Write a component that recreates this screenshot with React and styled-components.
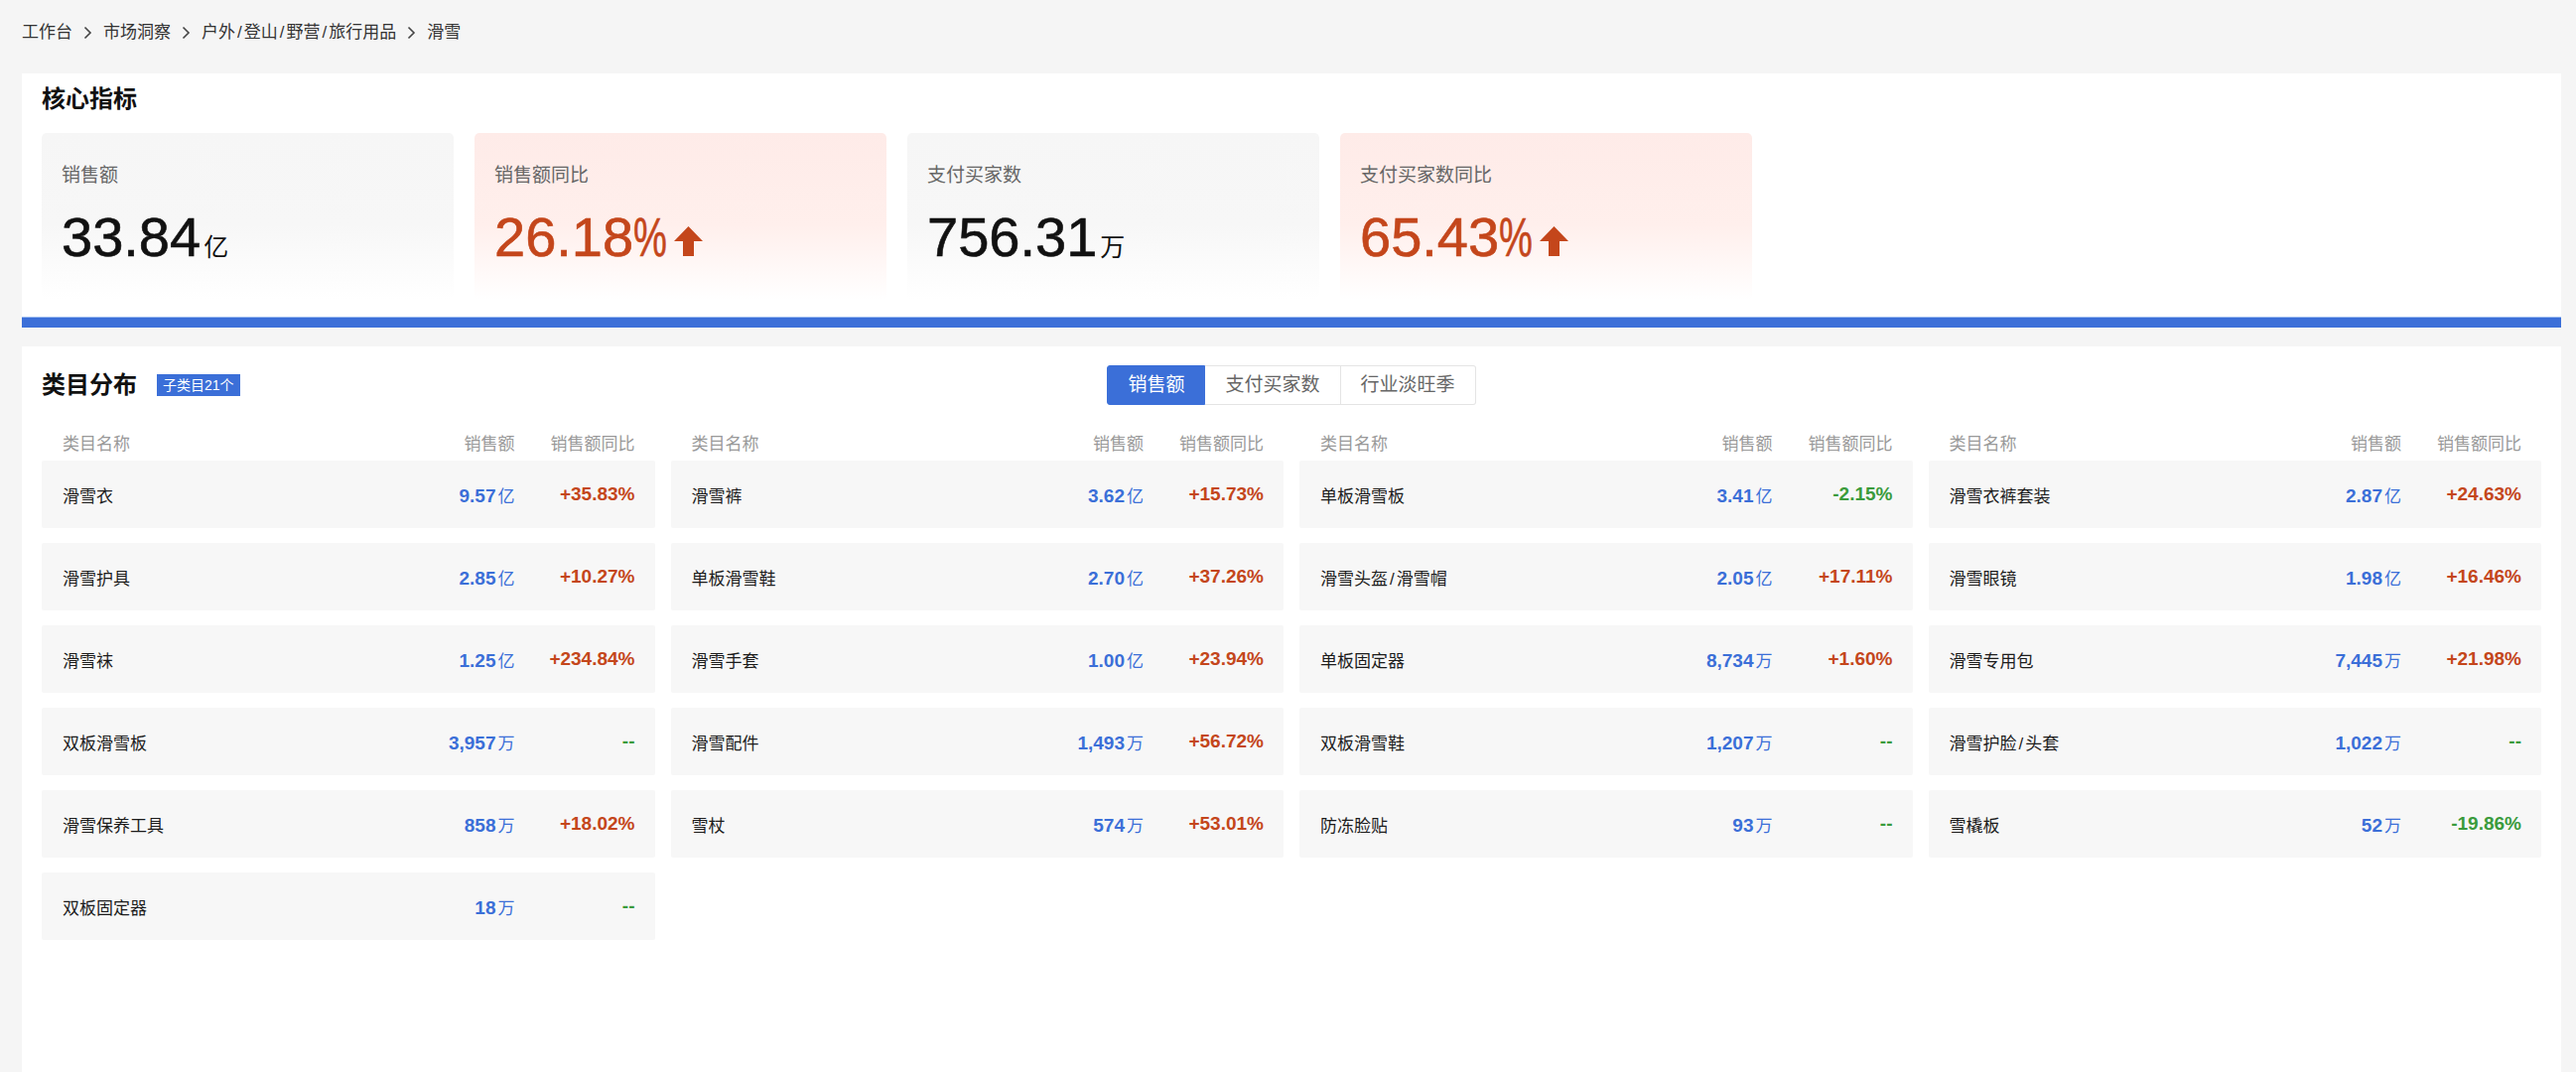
import React from "react";
import styled, { createGlobalStyle } from "styled-components";

const GlobalStyle = createGlobalStyle`
  html, body {
    margin: 0;
    padding: 0;
    background: #f5f5f5;
    font-family: "Liberation Sans", "Noto Sans CJK SC", Arial, sans-serif;
    color: #222;
  }
  * { box-sizing: border-box; }
`;

const BLUE = "#3b6fd8";
const RED = "#c4461b";
const GREEN = "#3a9b3c";

const Page = styled.div`
  padding: 0 15px 0 22px;
  min-height: 1080px;
`;

const Breadcrumb = styled.nav`
  height: 74px;
  padding-bottom: 8px;
  display: flex;
  align-items: center;
  font-size: 17px;
  color: #333;
`;

const Crumb = styled.span`
  line-height: 24px;
`;

const Slash = styled.span`
  padding: 0 2px;
`;

const Sep = styled.span`
  display: inline-flex;
  align-items: center;
  margin: 0 11px;
`;

const Panel = styled.section`
  background: #fff;
  padding: ${(p) => p.$pad};
`;

const KpiPanel = styled(Panel)`
  border-bottom: 10px solid ${BLUE};
  box-shadow: inset 0 -1px 0 #9dbcf0;
  margin-bottom: 19px;
`;

const CategoryPanel = styled(Panel)`
  min-height: 731px;
`;

const PanelTitle = styled.h2`
  margin: 0;
  font-size: 24px;
  line-height: 32px;
  font-weight: 700;
  color: #111;
`;

const Cards = styled.div`
  display: flex;
  gap: 21px;
  margin-top: 18px;
  padding-bottom: 18px;
`;

const Card = styled.div`
  width: 415px;
  height: 168px;
  border-radius: 5px;
  padding: 30px 20px 0;
  background: ${(p) =>
    p.$tone === "red"
      ? "linear-gradient(180deg, #feebe8 0%, #ffefec 55%, #ffffff 100%)"
      : "linear-gradient(180deg, #f6f6f6 0%, #f7f7f7 55%, #ffffff 100%)"};
`;

const CardLabel = styled.div`
  font-size: 19px;
  line-height: 26px;
  color: #666;
`;

const CardValue = styled.div`
  margin-top: 22px;
  display: flex;
  align-items: baseline;
  font-size: 56px;
  line-height: 53px;
  color: ${(p) => (p.$tone === "red" ? RED : "#111")};
  -webkit-text-stroke: 0.6px currentColor;
`;

const Percent = styled.span`
  display: inline-block;
  transform: scaleX(0.68);
  transform-origin: left center;
  margin-right: -20px;
`;

const Unit = styled.span`
  font-size: 25px;
  margin-left: 3px;
  -webkit-text-stroke: 0;
`;

const ArrowWrap = styled.span`
  display: inline-flex;
  margin-left: 11px;
`;

const SectionHead = styled.div`
  display: grid;
  grid-template-columns: 1fr auto 1fr;
  align-items: center;
  height: 40px;
`;

const TitleGroup = styled.div`
  display: flex;
  align-items: center;
  gap: 20px;
`;

const Badge = styled.span`
  display: inline-block;
  height: 22px;
  line-height: 22px;
  padding: 0 6px;
  font-size: 14px;
  color: #fff;
  background: ${BLUE};
`;

const Tabs = styled.div`
  display: flex;
  height: 40px;
`;

const Tab = styled.div`
  padding: 0 20px;
  font-size: 19px;
  line-height: 38px;
  border: 1px solid ${(p) => (p.$active ? BLUE : "#e4e4e4")};
  border-left-width: ${(p) => (p.$first || p.$active ? "1px" : "0")};
  background: ${(p) => (p.$active ? BLUE : "#fff")};
  color: ${(p) => (p.$active ? "#fff" : "#666")};
  border-radius: ${(p) => (p.$first ? "3px 0 0 3px" : p.$last ? "0 3px 3px 0" : "0")};
`;

const Grid = styled.div`
  display: grid;
  grid-template-columns: repeat(4, 1fr);
  column-gap: 16px;
  margin-top: 22px;
`;

const Column = styled.div`
  display: flex;
  flex-direction: column;
  gap: 15px;
`;

const HeadRow = styled.div`
  display: flex;
  align-items: center;
  height: 30px;
  padding: 0 20px 0 21px;
  margin-bottom: -11px;
  font-size: 17px;
  color: #999;
`;

const Row = styled.div`
  display: flex;
  align-items: center;
  height: 68px;
  padding: 0 20px 0 21px;
  background: #f7f7f7;
  border-radius: 2px;
  font-size: 17px;
`;

const Name = styled.div`
  flex: 1;
  color: ${(p) => (p.$head ? "#999" : "#1c1c1c")};
`;

const Sales = styled.div`
  text-align: right;
  color: ${(p) => (p.$head ? "#999" : BLUE)};
`;

const SalesNum = styled.span`
  font-size: 19px;
  font-weight: 700;
`;

const SalesUnit = styled.span`
  margin-left: 2px;
`;

const Pct = styled.div`
  width: 121px;
  text-align: right;
  font-size: ${(p) => (p.$head ? "17px" : "19px")};
  font-weight: ${(p) => (p.$head ? 400 : 700)};
  color: ${(p) => (p.$head ? "#999" : p.$down ? GREEN : RED)};
`;

const Chevron = () => (
  <svg width="9" height="14" viewBox="0 0 9 14">
    <polyline points="1.5,1.5 7,7 1.5,12.5" fill="none" stroke="#444" strokeWidth="1.6" />
  </svg>
);

const UpArrow = () => (
  <svg width="29" height="30" viewBox="0 0 29 30">
    <path d="M14.5 0 L29 15 H20 V30 H9 V15 H0 Z" fill={RED} />
  </svg>
);

const crumbs = ["工作台", "市场洞察", "户外/登山/野营/旅行用品", "滑雪"];

const kpis = [
  { label: "销售额", value: "33.84", unit: "亿", tone: "gray" },
  { label: "销售额同比", value: "26.18", percent: true, arrow: true, tone: "red" },
  { label: "支付买家数", value: "756.31", unit: "万", tone: "gray" },
  { label: "支付买家数同比", value: "65.43", percent: true, arrow: true, tone: "red" },
];

const columns = [
  [
    ["滑雪衣", "9.57", "亿", "+35.83%"],
    ["滑雪护具", "2.85", "亿", "+10.27%"],
    ["滑雪袜", "1.25", "亿", "+234.84%"],
    ["双板滑雪板", "3,957", "万", "--"],
    ["滑雪保养工具", "858", "万", "+18.02%"],
    ["双板固定器", "18", "万", "--"],
  ],
  [
    ["滑雪裤", "3.62", "亿", "+15.73%"],
    ["单板滑雪鞋", "2.70", "亿", "+37.26%"],
    ["滑雪手套", "1.00", "亿", "+23.94%"],
    ["滑雪配件", "1,493", "万", "+56.72%"],
    ["雪杖", "574", "万", "+53.01%"],
  ],
  [
    ["单板滑雪板", "3.41", "亿", "-2.15%"],
    ["滑雪头盔/滑雪帽", "2.05", "亿", "+17.11%"],
    ["单板固定器", "8,734", "万", "+1.60%"],
    ["双板滑雪鞋", "1,207", "万", "--"],
    ["防冻脸贴", "93", "万", "--"],
  ],
  [
    ["滑雪衣裤套装", "2.87", "亿", "+24.63%"],
    ["滑雪眼镜", "1.98", "亿", "+16.46%"],
    ["滑雪专用包", "7,445", "万", "+21.98%"],
    ["滑雪护脸/头套", "1,022", "万", "--"],
    ["雪橇板", "52", "万", "-19.86%"],
  ],
];

const tabs = ["销售额", "支付买家数", "行业淡旺季"];

const withSlashes = (text) =>
  text.split("/").map((part, i) => (
    <React.Fragment key={i}>
      {i > 0 && <Slash>/</Slash>}
      {part}
    </React.Fragment>
  ));

export default function App() {
  return (
    <>
      <GlobalStyle />
      <Page>
        <Breadcrumb>
          {crumbs.map((c, i) => (
            <React.Fragment key={c}>
              {i > 0 && (
                <Sep>
                  <Chevron />
                </Sep>
              )}
              <Crumb>{withSlashes(c)}</Crumb>
            </React.Fragment>
          ))}
        </Breadcrumb>

        <KpiPanel $pad="10px 20px 0">
          <PanelTitle>核心指标</PanelTitle>
          <Cards>
            {kpis.map((k) => (
              <Card key={k.label} $tone={k.tone}>
                <CardLabel>{k.label}</CardLabel>
                <CardValue $tone={k.tone}>
                  {k.value}
                  {k.percent && <Percent>%</Percent>}
                  {k.unit && <Unit>{k.unit}</Unit>}
                  {k.arrow && (
                    <ArrowWrap>
                      <UpArrow />
                    </ArrowWrap>
                  )}
                </CardValue>
              </Card>
            ))}
          </Cards>
        </KpiPanel>

        <CategoryPanel $pad="19px 20px 40px">
          <SectionHead>
            <TitleGroup>
              <PanelTitle>类目分布</PanelTitle>
              <Badge>子类目21个</Badge>
            </TitleGroup>
            <Tabs>
              {tabs.map((t, i) => (
                <Tab key={t} $active={i === 0} $first={i === 0} $last={i === tabs.length - 1}>
                  {t}
                </Tab>
              ))}
            </Tabs>
            <div />
          </SectionHead>

          <Grid>
            {columns.map((rows, ci) => (
              <Column key={ci}>
                <HeadRow>
                  <Name $head>类目名称</Name>
                  <Sales $head>销售额</Sales>
                  <Pct $head>销售额同比</Pct>
                </HeadRow>
                {rows.map(([name, num, unit, pct]) => (
                  <Row key={name}>
                    <Name>{withSlashes(name)}</Name>
                    <Sales>
                      <SalesNum>{num}</SalesNum>
                      <SalesUnit>{unit}</SalesUnit>
                    </Sales>
                    <Pct $down={!pct.startsWith("+")}>{pct}</Pct>
                  </Row>
                ))}
              </Column>
            ))}
          </Grid>
        </CategoryPanel>
      </Page>
    </>
  );
}
